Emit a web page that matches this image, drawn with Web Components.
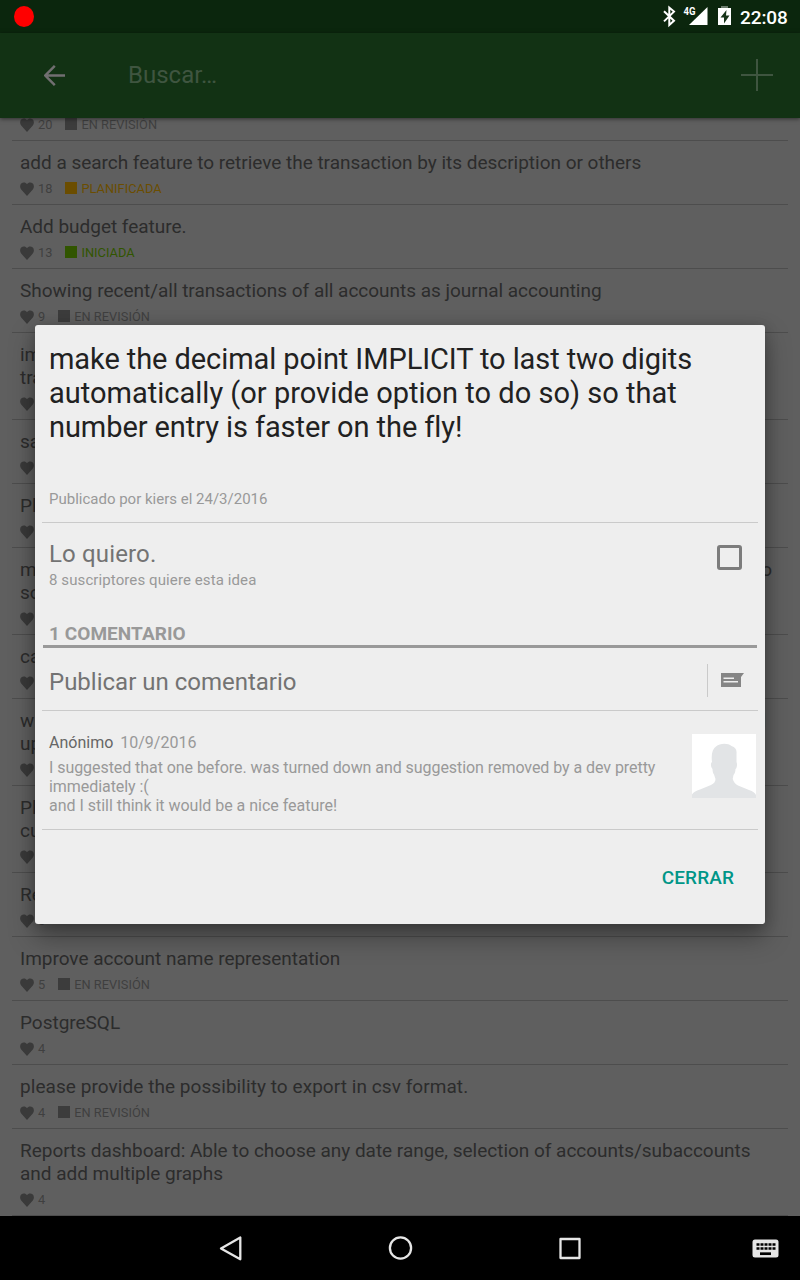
<!DOCTYPE html>
<html lang="es"><head><meta charset="utf-8"><title>Sugerencias</title>
<style>html,body{margin:0;height:100%;background:#000;overflow:hidden}body{font-family:Roboto,sans-serif}</style></head>
<body>
<feedback-app></feedback-app>
<script>
const define=(name,html)=>customElements.define(name,class extends HTMLElement{
  constructor(){super();this.attachShadow({mode:'open'});}
  connectedCallback(){this.shadowRoot.innerHTML='<style>*{box-sizing:border-box}svg{display:block;flex:none}</style>'+(typeof html==='function'?html(this):html);}
});

define('status-bar',`<style>
:host{display:flex;align-items:center;height:33px;background:#0b260d;color:#fff;padding:0 11px 0 14px}
.dot{width:20px;height:21px;border-radius:50%;background:#f00;margin-right:auto}
time{font-weight:500;font-size:19px;letter-spacing:-.1px;line-height:22px;padding-top:2px;width:49px;white-space:nowrap}
</style><div class="dot"></div>
<svg width="122" height="33" viewBox="654 0 122 33" style="width:86px" preserveAspectRatio="xMinYMid slice">
<path d="M664 11.2l10 9.6-4.7 4.2V7.6l4.700 4-10 9.800" fill="none" stroke="#fff" stroke-width="2"/>
<path d="M689 25L707.500 7v18z" fill="#fff"/>
<text x="683.500" y="15" font-family="Roboto" font-weight="700" font-size="10.500" fill="#fff" textLength="12" lengthAdjust="spacingAndGlyphs">4G</text>
<path d="M718 8h13v17h-13z" fill="#fff"/><path d="M721 6h7v2h-7z" fill="#6d7d6e"/><path d="M726.500 10l-6 7.500h3.500v6l5.500-8h-3.500z" fill="#173519"/></svg>
<time>22:08</time>`);

define('search-bar',`<style>
:host{display:flex;align-items:center;height:85px;background:#123214;padding:0 27px 1px 44px;position:relative;box-shadow:0 1px 4px rgba(0,0,0,.5)}
span{font-size:24px;color:#3f5540;margin-left:63px;margin-right:auto;line-height:28px;padding-bottom:1px}
</style><svg width="21" height="21" viewBox="0 0 21 21"><path d="M21 10.500H2M10.800.800L1.300 10.500l9.500 9.700" fill="none" stroke="#716f71" stroke-width="2.400"/></svg>
<span>Buscar…</span>
<svg width="32" height="32" viewBox="0 0 32 32"><path d="M16 0v32M0 16h32" stroke="#3f5540" stroke-width="2"/></svg>`);

define('idea-row',e=>`<style>
:host{display:block;flex:none;margin:0 12px;padding:10px 8px 9px;border-bottom:1px solid #4d4d4d;color:#2c2c2c}
.t{font-size:19px;letter-spacing:-.02px;line-height:23px;display:flex;justify-content:space-between}
.m{display:flex;align-items:center;height:14px;margin-top:7px;font-size:12.800px;color:#3f3f3f}
.m svg{margin-top:2px}
.n{margin-left:4px}.sq{width:12px;height:12px;background:var(--mark,#3c3c3c);margin:0 4px 0 13px}
.s{font-size:12.800px;letter-spacing:.03px;color:var(--mark,#3f3f3f)}
</style><div class="t"><slot></slot></div><div class="m">
<svg width="14" height="14" viewBox="0 0 14 14"><path d="M7 14L1.200 7.600C-.3 5.800-.2 3 1.200 1.600 2.900-.1 5.700.1 7 2.300 8.300.1 11.100-.1 12.800 1.600 14.200 3 14.300 5.800 12.800 7.600z" fill="#3a3a3a"/></svg>
${e.hasAttribute('n')?`<span class="n">${e.getAttribute('n')}</span>`:''}${e.hasAttribute('s')?`<i class="sq"></i><span class="s">${e.getAttribute('s')}</span>`:''}</div>`);

define('idea-list',`<style>:host{display:flex;flex-direction:column;justify-content:flex-end;flex:1;min-height:0;overflow:hidden;background:#5f5f5f}</style>
<idea-row n="20" s="EN REVISIÓN">&nbsp;</idea-row>
<idea-row n="18" s="PLANIFICADA" style="--mark:#6b4d00">add a search feature to retrieve the transaction by its description or others</idea-row>
<idea-row n="13" s="INICIADA" style="--mark:#315500">Add budget feature.</idea-row>
<idea-row n="9" s="EN REVISIÓN">Showing recent/all transactions of all accounts as journal accounting</idea-row>
<idea-row><span>im<br>tra</span></idea-row>
<idea-row>sa</idea-row>
<idea-row>Pl</idea-row>
<idea-row><span>m<br>so</span><span style="margin-right:8px">o</span></idea-row>
<idea-row>ca</idea-row>
<idea-row><span>w<br>up</span><span style="margin-right:14px">l</span></idea-row>
<idea-row><span>Pl<br>cu</span></idea-row>
<idea-row n="5">Re</idea-row>
<idea-row n="5" s="EN REVISIÓN">Improve account name representation</idea-row>
<idea-row n="4">PostgreSQL</idea-row>
<idea-row n="4" s="EN REVISIÓN"><span style="letter-spacing:.06px">please provide the possibility to export in csv format.</span></idea-row>
<idea-row n="4"><span>Reports dashboard: Able to choose any date range, selection of accounts/subaccounts<br>and add multiple graphs</span></idea-row>`);

define('idea-comment',`<style>
:host{display:flex;justify-content:space-between;height:119px;border-bottom:1px solid #cacaca;padding:23px 2px 0 7px;color:#999}
.h{font-size:16px;line-height:19px;margin-top:-1px}.h b{font-weight:400;color:#666;margin-right:7px}
.x{margin-top:6px;font-size:16px;line-height:19px;letter-spacing:-.06px;white-space:nowrap}
</style><div><div class="h"><b>Anónimo</b><span>10/9/2016</span></div>
<div class="x">I suggested that one before. was turned down and suggestion removed by a dev pretty<br>immediately :(<br><span style="letter-spacing:-.02px">and I still think it would be a nice feature!</span></div></div>
<svg width="64" height="64" viewBox="0 0 64 64"><path fill="#fff" d="M0 0h64v64H0z"/><path fill="#e2e4e6" d="M0 64v-3.500C1 58 4 57 8 55.500L19 51c3-1.500 4.500-3.500 4.500-6L22 40.500c-1-1-1.500-3.500-1.500-5.500-2-2-2-6-.5-7-1-8 .5-13 4-15.500C28 9 36 9 39.500 12c4 1 5.500 4 5 8v8c1 2 .5 6-1 7 0 3-1 5-2 6l-.8 4c1 3 2.300 5 5.300 6.500L57 56c4 1.500 6 2.500 7 5v3z"/></svg>`);

define('idea-dialog',`<style>
:host{display:flex;flex-direction:column;width:730px;height:599px;background:#eee;border-radius:3px;padding:17px 7px 0;box-shadow:0 13px 26px rgba(0,0,0,.34),0 2px 14px rgba(0,0,0,.2)}
h1{font-weight:400;font-size:29px;letter-spacing:-.08px;line-height:34px;color:#212121;margin:0;padding-left:7px;height:102px;white-space:nowrap}
.pub{font-size:15px;line-height:18px;color:#999;padding:46px 7px 14px;height:79px;border-bottom:1px solid #cacaca}
.want{display:flex;justify-content:space-between;height:99px;padding:17px 16px 0 7px}
.l{font-size:24px;line-height:28px;color:#737373}.want .l{letter-spacing:.15px}.sub{font-size:15px;letter-spacing:.1px;line-height:18px;color:#999;margin-top:3px}
.chk{width:25px;height:25px;border:3px solid #7c7c7c;border-radius:3px;margin-top:5px}
h2{margin:0 1px;height:26px;border-bottom:3px solid #999;font-size:19px;letter-spacing:.06px;line-height:24px;color:#999;padding-left:6px}
.post{display:flex;align-items:center;height:63px;border-bottom:1px solid #cacaca;padding:5px 14px 0 7px}
.post i{width:1px;height:33px;background:#cacaca;margin:-3px 13px 0 auto}
.post svg{margin-top:-4px}
.close{align-self:flex-end;margin:37px 24px 0;font-weight:500;font-size:19px;letter-spacing:.1px;line-height:22px;color:#009688}
</style>
<h1>make the decimal point IMPLICIT to last two digits<br><span style="letter-spacing:.01px">automatically (or provide option to do so) so that</span><br>number entry is faster on the fly!</h1>
<div class="pub">Publicado por kiers el 24/3/2016</div>
<div class="want"><div><div class="l">Lo quiero.</div><div class="sub">8 suscriptores quiere esta idea</div></div><div class="chk"></div></div>
<h2>1 COMENTARIO</h2>
<div class="post"><span class="l">Publicar un comentario</span><i></i>
<svg width="23" height="14" viewBox="0 0 23 14"><path fill="#858585" d="M0 0h23l-3 4v10H0z"/><path d="M2.500 5.200h10.500M2.500 8.800h14.500" stroke="#eee" stroke-width="1.600"/></svg></div>
<idea-comment></idea-comment>
<div class="close">CERRAR</div>`);

define('nav-bar',`<style>:host{display:block;height:64px;background:#000}</style>
<svg width="800" height="64" viewBox="0 1216 800 64"><g fill="none" stroke="#e6e6e6" stroke-width="2.300" stroke-linejoin="round">
<path d="M240.300 1237.500v21.800l-19.300-10.900z"/><circle cx="400.500" cy="1248" r="10.600"/><rect x="560.500" y="1239" width="19" height="19"/></g>
<rect x="752.500" y="1239.500" width="26" height="18" rx="2.500" fill="#e6e6e6"/>
<path d="M756.500 1244.500h19M756.500 1248.500h19" stroke="#000" stroke-width="2.600" stroke-dasharray="3 1"/><path d="M760 1253.700h11" stroke="#000" stroke-width="2.700"/></svg>`);

define('feedback-app',`<style>
:host{display:flex;flex-direction:column;width:800px;height:1280px;position:relative;overflow:hidden}
search-bar{z-index:1}status-bar,search-bar,nav-bar{flex:none}
.layer{position:absolute;inset:33px 0 64px;z-index:2;display:flex;align-items:center;justify-content:center}
</style><status-bar></status-bar><search-bar></search-bar><idea-list></idea-list><nav-bar></nav-bar>
<div class="layer"><idea-dialog></idea-dialog></div>`);
</script></body></html>
